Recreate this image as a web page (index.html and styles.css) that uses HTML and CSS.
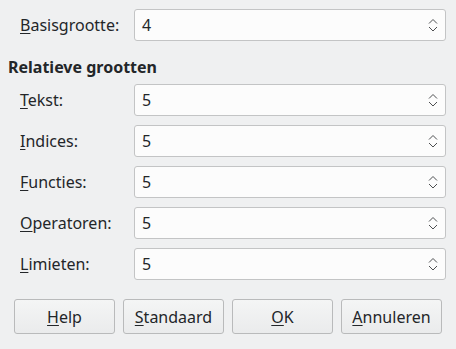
FILE: index.html
```html
<!DOCTYPE html>
<html lang="nl">
<head>
  <meta charset="UTF-8" />
  <title>Lettergrootten</title>
  <link rel="stylesheet" href="styles.css">
</head>
<body>
  <div class="dialog">
    <div class="row">
      <label class="label"><u>B</u>asisgrootte:</label>
      <div class="spin"><span>4</span><svg class="arrows" width="10" height="16" viewBox="0 0 10 16"><path d="M1 6.5 L5 2.5 L9 6.5 M1 10 L5 14 L9 10" fill="none" stroke="#4d4f51" stroke-width="1"/></svg></div>
    </div>

    <div class="group-title">Relatieve grootten</div>

    <div class="rows">
      <div class="row">
        <label class="label"><u>T</u>ekst:</label>
        <div class="spin"><span>5</span><svg class="arrows" width="10" height="16" viewBox="0 0 10 16"><path d="M1 6.5 L5 2.5 L9 6.5 M1 10 L5 14 L9 10" fill="none" stroke="#4d4f51" stroke-width="1"/></svg></div>
      </div>
      <div class="row">
        <label class="label"><u>I</u>ndices:</label>
        <div class="spin"><span>5</span><svg class="arrows" width="10" height="16" viewBox="0 0 10 16"><path d="M1 6.5 L5 2.5 L9 6.5 M1 10 L5 14 L9 10" fill="none" stroke="#4d4f51" stroke-width="1"/></svg></div>
      </div>
      <div class="row">
        <label class="label"><u>F</u>uncties:</label>
        <div class="spin"><span>5</span><svg class="arrows" width="10" height="16" viewBox="0 0 10 16"><path d="M1 6.5 L5 2.5 L9 6.5 M1 10 L5 14 L9 10" fill="none" stroke="#4d4f51" stroke-width="1"/></svg></div>
      </div>
      <div class="row">
        <label class="label"><u>O</u>peratoren:</label>
        <div class="spin"><span>5</span><svg class="arrows" width="10" height="16" viewBox="0 0 10 16"><path d="M1 6.5 L5 2.5 L9 6.5 M1 10 L5 14 L9 10" fill="none" stroke="#4d4f51" stroke-width="1"/></svg></div>
      </div>
      <div class="row">
        <label class="label"><u>L</u>imieten:</label>
        <div class="spin"><span>5</span><svg class="arrows" width="10" height="16" viewBox="0 0 10 16"><path d="M1 6.5 L5 2.5 L9 6.5 M1 10 L5 14 L9 10" fill="none" stroke="#4d4f51" stroke-width="1"/></svg></div>
      </div>
    </div>

    <div class="buttons">
      <button class="btn"><u>H</u>elp</button>
      <button class="btn"><u>S</u>tandaard</button>
      <button class="btn"><u>O</u>K</button>
      <button class="btn"><u>A</u>nnuleren</button>
    </div>
  </div>
</body>
</html>
```

FILE: styles.css
```css
html, body {
  margin: 0;
  background: #eff0f1;
}

body {
  font-family: 'Noto Sans', sans-serif;
  font-size: 16px;
  color: #232629;
}

.dialog {
  padding: 9px 10px 0 8px;
}

u {
  text-decoration-thickness: 1px;
  text-underline-offset: 2px;
}

.row {
  display: grid;
  grid-template-columns: 126px 1fr;
  align-items: center;
  height: 32px;
}

.label {
  padding-left: 12px;
}

.spin {
  display: flex;
  align-items: center;
  justify-content: space-between;
  height: 32px;
  box-sizing: border-box;
  background: #fcfcfc;
  border: 1px solid #c3c4c5;
  border-radius: 3px;
  padding: 0 7px 0 7px;
}

.arrows {
  display: block;
}

.group-title {
  font-weight: bold;
  line-height: 20px;
  margin: 16px 0 7px 0;
}

.rows {
  display: flex;
  flex-direction: column;
  gap: 9px;
}

.buttons {
  display: flex;
  gap: 8px;
  margin: 19px 0 0 6px;
}

.btn {
  width: 101px;
  height: 35px;
  font-family: 'Noto Sans', sans-serif;
  font-size: 16px;
  color: #232629;
  background: linear-gradient(#f4f5f5, #eaebec);
  border: 1px solid #b9babb;
  border-radius: 3px;
  padding: 0;
}
```
